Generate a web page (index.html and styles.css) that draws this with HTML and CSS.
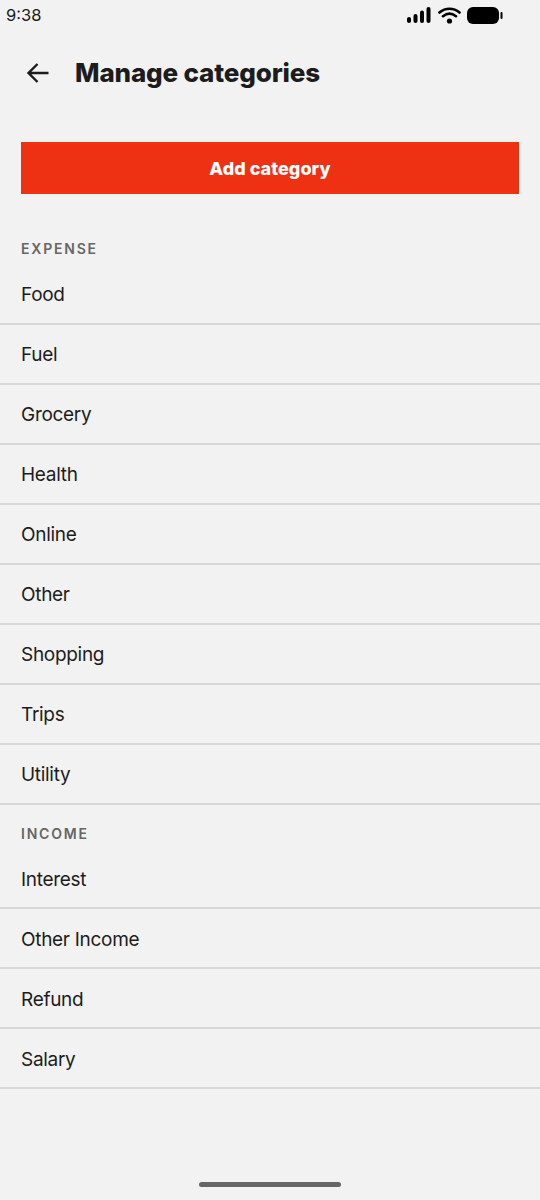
FILE: index.html
```html
<!DOCTYPE html>
<html lang="en">
<head>
<meta charset="utf-8">
<title>Manage categories</title>
<link rel="stylesheet" href="styles.css">
</head>
<body>
<div class="screen">
  <div class="status">
    <span class="time">9:38</span>
    <div class="status-icons">
      <svg class="signal" width="24" height="16" viewBox="0 0 24 16"><rect x="0" y="10" width="4" height="6" rx="2"/><rect x="6.5" y="7" width="4" height="9" rx="2"/><rect x="13" y="3.5" width="4" height="12.5" rx="2"/><rect x="19.5" y="0" width="4" height="16" rx="2"/></svg>
      <svg class="wifi" width="23" height="17" viewBox="0 0 23 17"><path d="M1.5 5.5C7.5 .5 15.5 .5 21.5 5.5M5 9.2C9 6 14 6 18 9.2" fill="none" stroke="#000" stroke-width="2.6" stroke-linecap="round"/><circle cx="11.5" cy="14" r="2.6"/></svg>
      <svg class="battery" width="36" height="17" viewBox="0 0 36 17"><rect x="0" y="0" width="32" height="17" rx="6"/><rect x="33.5" y="5" width="2" height="7" rx="1"/></svg>
    </div>
  </div>
  <header class="header">
    <svg class="back" width="26" height="26" viewBox="0 0 26 26"><path d="M23.5 13H3.5M12.5 4L3.5 13L12.5 22" fill="none" stroke="#1c1c1c" stroke-width="2.4"/></svg>
    <h1 class="title">Manage categories</h1>
  </header>
  <div class="action"><button class="add">Add category</button></div>
  <h2 class="section first">EXPENSE</h2>
  <ul class="list">
    <li>Food</li><li>Fuel</li><li>Grocery</li><li>Health</li><li>Online</li><li>Other</li><li>Shopping</li><li>Trips</li><li>Utility</li>
  </ul>
  <h2 class="section">INCOME</h2>
  <ul class="list income">
    <li>Interest</li><li>Other Income</li><li>Refund</li><li>Salary</li>
  </ul>
  <div class="home"></div>
</div>
</body>
</html>
```
FILE: styles.css
```css
* { box-sizing: border-box; }
html, body { margin: 0; padding: 0; }
body { background: #f2f2f2; font-family: "Liberation Sans", Arial, sans-serif; color: #1c1c1c; }
.screen { position: relative; width: 540px; height: 1200px; overflow: hidden; background: #f2f2f2; }
.status { height: 32px; display: flex; justify-content: space-between; align-items: center; padding: 0 37px 2px 6px; }
.time { font-family: "Inter", sans-serif; font-size: 16.5px; color: #1a1a1a; }
.status-icons { display: flex; align-items: center; gap: 6px; }
.status-icons svg { fill: #000; display: block; }
.signal { margin-right: 1px; }
.header { height: 82px; display: flex; align-items: center; padding: 0 0 0 25px; }
.back { margin-right: 24px; flex: none; }
.title { margin: 0 0 2px; font-family: "Inter", sans-serif; font-size: 26px; font-weight: 800; letter-spacing: -0.15px; color: #1c1c1c; white-space: nowrap; }
.action { padding: 28px 21px 0; }
.add { display: block; width: 100%; height: 52px; border: 0; border-radius: 0; background: #ee3112; color: #fff; font-family: "Inter", sans-serif; font-size: 18px; font-weight: 800; letter-spacing: 0.05px; }
.section { margin: 0; height: 44px; padding: 20px 0 0 21px; font-family: "Inter", sans-serif; font-size: 14px; line-height: 18px; font-weight: 600; letter-spacing: 1.8px; color: #666; }
.section.first { height: 71px; padding-top: 46px; }
.list { list-style: none; margin: 0; padding: 0; }
.list li { height: 60px; padding-left: 21px; display: flex; align-items: center; border-bottom: 2px solid #d8d8d8; font-family: "Inter", sans-serif; font-size: 19px; letter-spacing: -0.3px; color: #1c1c1c; }
.list.income li { padding-top: 2px; }
.home { position: absolute; left: 199px; bottom: 13px; width: 142px; height: 5px; border-radius: 3px; background: #666; }
```
